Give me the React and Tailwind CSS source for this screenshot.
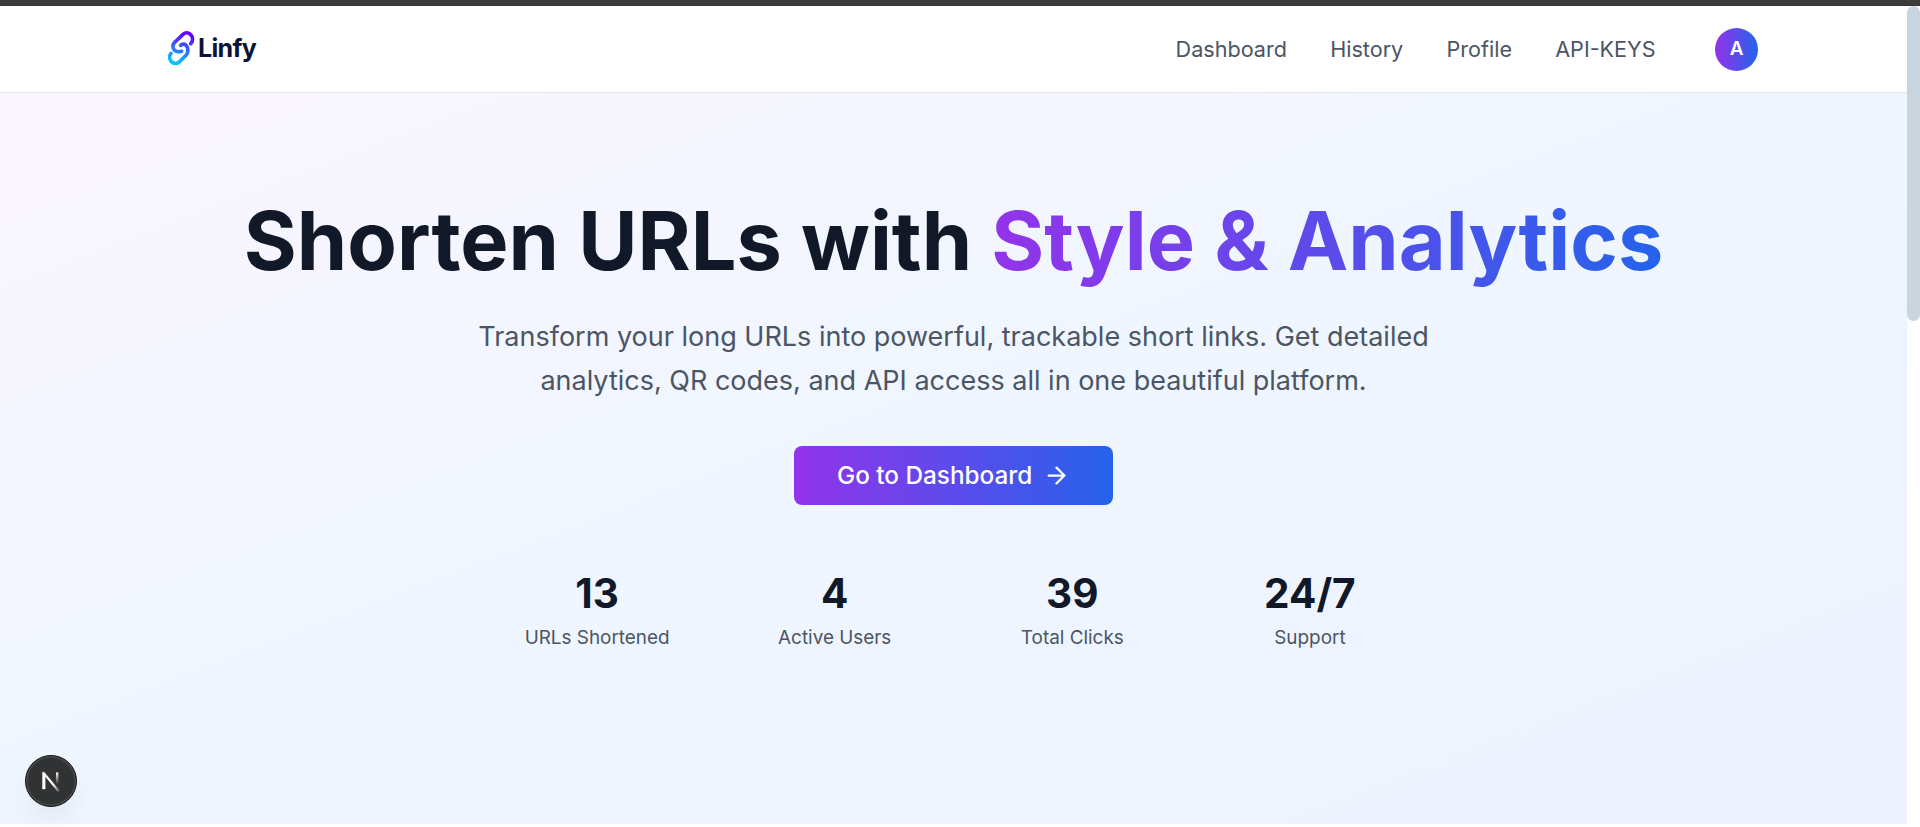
import { ArrowRight } from "lucide-react";

const navItems = ["Dashboard", "History", "Profile", "API-KEYS"];

const stats = [
  { value: "13", label: "URLs Shortened" },
  { value: "4", label: "Active Users" },
  { value: "39", label: "Total Clicks" },
  { value: "24/7", label: "Support" },
];

function Logo() {
  return (
    <div className="flex items-center gap-[3px] pb-[2px]">
      <svg className="h-[36px] w-[28px]" viewBox="50 90 84 108" fill="none">
        <defs>
          <linearGradient id="chain" gradientUnits="userSpaceOnUse" x1="110" y1="94" x2="74" y2="195">
            <stop offset="0.1" stopColor="#6500ff" />
            <stop offset="0.5" stopColor="#3267ff" />
            <stop offset="0.95" stopColor="#00c8ff" />
          </linearGradient>
        </defs>
        <g stroke="url(#chain)" strokeWidth="11" strokeLinecap="round">
          <path d="M121 131C128 124 129 112 122 105C115 97 105 97 98 103L73 127C66 134 66 145 73 151C79 156 87 156 94 154" />
          <path d="M62 160C56 167 57 178 63 185C70 192 80 192 87 186L107 166C114 158 115 145 108 137C103 131 96 131 91 136" />
        </g>
      </svg>
      <span className="text-[25px] leading-[30px] font-[650] tracking-[-0.65px] text-[#0b1437]">Linfy</span>
    </div>
  );
}

function Header() {
  return (
    <header className="flex h-[87px] shrink-0 items-center justify-between border-b border-[#e5e7eb] bg-white pr-[149px] pl-[167px]">
      <Logo />
      <div className="flex items-center">
        <nav className="flex gap-[43.2px] text-[21.6px] leading-[32.4px] text-[#4b5563]">
          {navItems.map((item) => (
            <a key={item} href="#">{item}</a>
          ))}
        </nav>
        <button className="mt-px ml-[59.4px] flex size-[43px] items-center justify-center rounded-full bg-linear-to-r/srgb from-[#9333ea] to-[#2563eb] text-[18.9px] font-semibold text-white">
          A
        </button>
      </div>
    </header>
  );
}

function Hero() {
  return (
    <section className="flex flex-1 flex-col items-center bg-linear-to-br/srgb from-[#faf5ff] via-[#eff6ff] to-[#eef2ff] pt-[108px] text-center">
      <h1 className="text-[81px] leading-[81px] font-bold text-[#111827]">
        Shorten URLs with{" "}
        <span className="bg-linear-to-r/srgb from-[#9333ea] to-[#2563eb] bg-clip-text text-transparent">
          Style &amp; Analytics
        </span>
      </h1>
      <p className="mt-[33.2px] max-w-[1036.8px] text-[27px] leading-[43.875px] text-[#4b5563]">
        Transform your long URLs into powerful, trackable short links. Get detailed analytics, QR codes, and API
        access all in one beautiful platform.
      </p>
      <button className="mt-[43.05px] flex h-[59px] items-center gap-[10.8px] rounded-[8.1px] bg-linear-to-r/srgb from-[#9333ea] to-[#2563eb] px-[43.2px] text-[24.3px] font-medium text-white">
        Go to Dashboard
        <ArrowRight className="size-[27px]" />
      </button>
      <div className="mt-[64.8px] grid w-[907.2px] grid-cols-4 gap-[43.2px]">
        {stats.map(({ value, label }) => (
          <div key={label}>
            <div className="text-[40.5px] leading-[48.6px] font-bold text-[#111827]">{value}</div>
            <div className="mt-[5.4px] text-[18.9px] leading-[27px] text-[#4b5563]">{label}</div>
          </div>
        ))}
      </div>
    </section>
  );
}

function DevBadge() {
  return (
    <div className="absolute top-[755px] left-[25px] flex size-[52px] items-center justify-center rounded-full border border-[#151617] bg-[#303233] shadow-[inset_0_0_0_1.5px_#4a4c4c,0_16px_32px_-8px_rgba(0,0,0,0.1)]">
      <svg className="size-[22px]" viewBox="0 0 20 20" fill="none">
        <defs>
          <linearGradient id="diag" gradientUnits="userSpaceOnUse" x1="12" y1="13" x2="18" y2="20">
            <stop stopColor="#fff" />
            <stop offset="1" stopColor="#fff" stopOpacity="0.1" />
          </linearGradient>
          <linearGradient id="stem" gradientUnits="userSpaceOnUse" x1="15" y1="2" x2="15" y2="13">
            <stop stopColor="#fff" />
            <stop offset="1" stopColor="#fff" stopOpacity="0" />
          </linearGradient>
        </defs>
        <path d="M2.3 17.2V2L3.8 2L17.6 18.6L16.2 19.8L4.7 5.6V17.2Z" fill="url(#diag)" stroke="url(#diag)" strokeWidth="0.4" />
        <path d="M15.6 2.2V13" stroke="url(#stem)" strokeWidth="2.2" />
      </svg>
    </div>
  );
}

export default function App() {
  return (
    <div className="relative flex h-[827px] w-[1920px] flex-col overflow-hidden bg-white font-[Inter,sans-serif]">
      <div className="h-[6px] shrink-0 border-b border-[#38343a] bg-[#3b3b3b]" />
      <div className="flex min-h-0 flex-1">
        <div className="flex flex-1 flex-col pb-[3px]">
          <Header />
          <Hero />
        </div>
        <div className="w-[13px] bg-white">
          <div className="h-[315px] rounded-full bg-[#c8d5df]" />
        </div>
      </div>
      <DevBadge />
    </div>
  );
}
